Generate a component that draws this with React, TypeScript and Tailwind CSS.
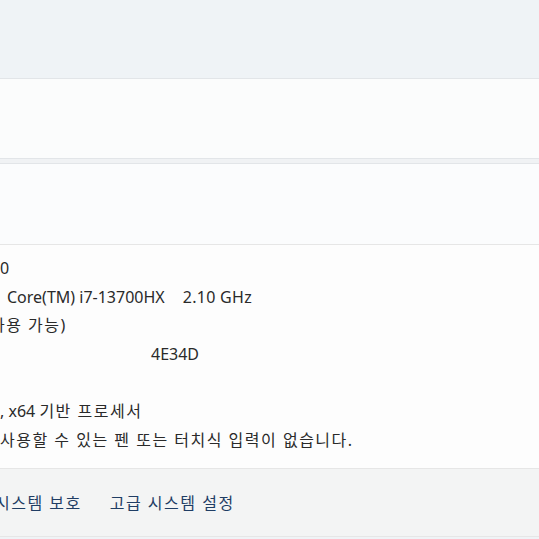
import React from "react";

const font = { fontFamily: '"Noto Sans", "Noto Sans CJK KR", sans-serif' };

function K({ children }: { children: React.ReactNode }) {
  return <span className="tracking-[1.5px]">{children}</span>;
}

export default function App() {
  return (
    <div className="w-[539px] h-[539px] overflow-hidden bg-[#eff3f6]" style={font}>
      <div className="h-[78px]" />
      <div className="h-[81px] border-y border-[#e2e5e8] bg-[#fbfcfc]" />
      <div className="h-[4px] bg-[#f0f2f4]" />
      <div className="border-t border-[#e2e5e8] bg-[#fdfdfd]">
        <div className="h-[81px] border-b border-[#e6e6e6] bg-[#fbfcfd]" />
        <div className="h-[224px] border-b border-[#e6e6e6] pt-[9px] text-[16px] leading-[28.67px] text-[#2a2a2a] whitespace-pre">
          <div className="h-[28.67px]">0</div>
          <div className="h-[28.67px] pl-[7px]">
            Core(TM) i7-13700HX<span className="pl-[18px] tracking-[0.3px]">2.10 GHz</span>
          </div>
          <div className="h-[28.67px] -ml-[10px]">
            <K>사용 가능</K>)
          </div>
          <div className="h-[28.67px] pl-[151px]">4E34D</div>
          <div className="h-[28.67px]" />
          <div className="h-[28.67px]">
            , x64 <K>기반 프로세서</K>
          </div>
          <div className="h-[28.67px]">
            <K>사용할 수 있는 펜 또는 터치식 입력이 없습니다.</K>
          </div>
        </div>
      </div>
      <div className="h-[68px] border-b border-[#e6e6e6] bg-[#f3f4f4] flex items-center gap-[28px] -ml-[5px] text-[16px] text-[#1f3d64] tracking-[1.5px]">
        <span>시스템 보호</span>
        <span>고급 시스템 설정</span>
      </div>
    </div>
  );
}
